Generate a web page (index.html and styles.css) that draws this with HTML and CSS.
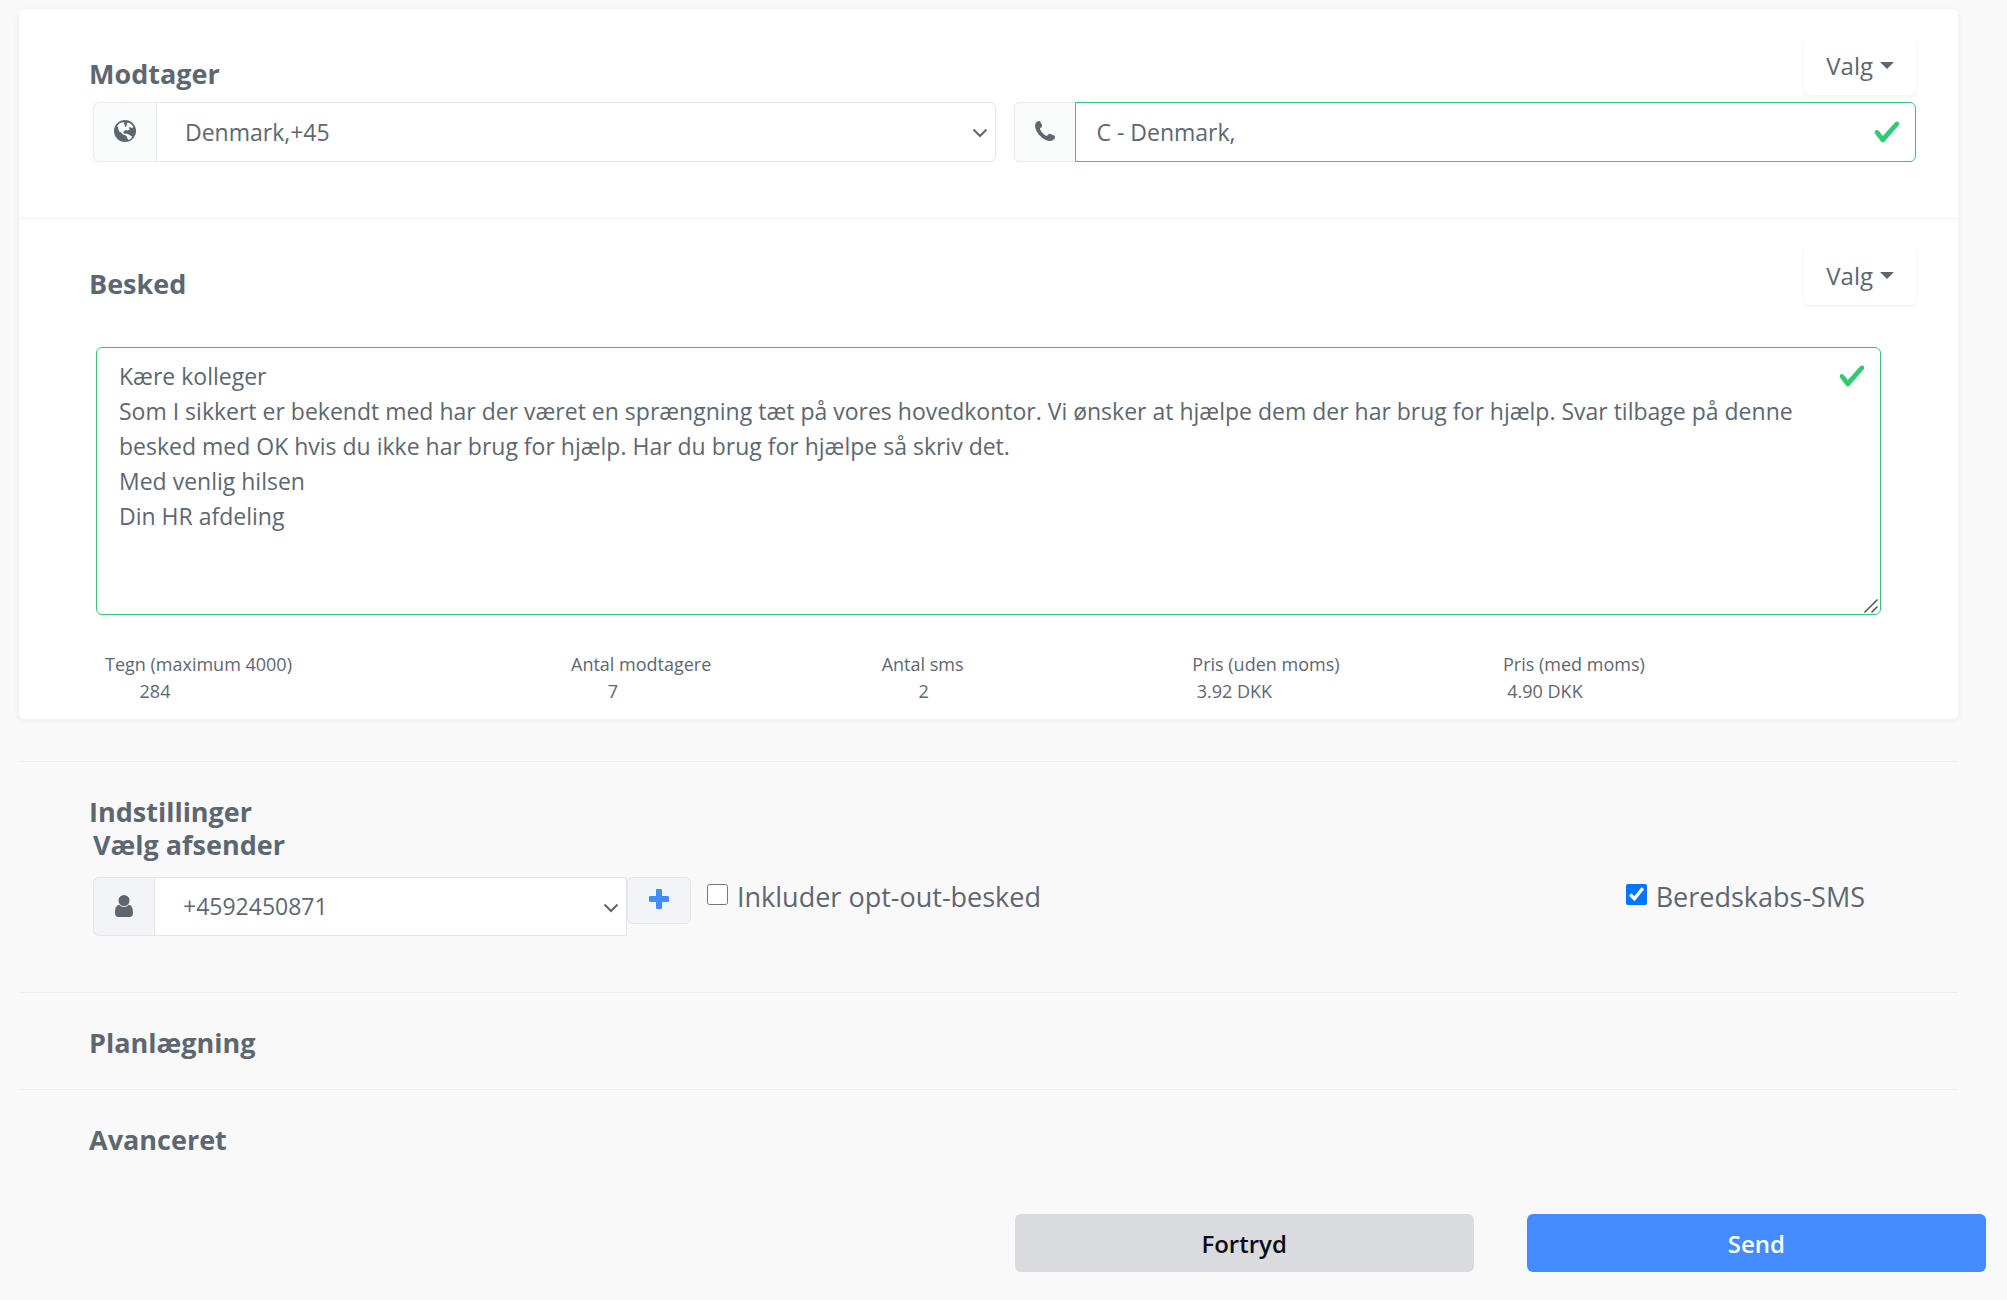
FILE: index.html
```html
<!DOCTYPE html>
<html lang="da">
<head>
<meta charset="utf-8">
<meta name="viewport" content="width=device-width, initial-scale=1">
<title>Send SMS</title>
<link rel="stylesheet" href="styles.css">
</head>
<body>
<form class="page">
  <div class="card">
    <section class="section">
      <div class="section-head">
        <h2 class="title">Modtager</h2>
        <button type="button" class="menu-button">Valg<span class="caret"></span></button>
      </div>
      <div class="recipient">
        <div class="group">
          <label class="addon addon-wide" for="country" aria-label="Land">
            <svg class="icon" width="22" height="22" viewBox="0 0 22 22"><circle cx="11" cy="11" r="11" fill="currentColor"/><path fill="#fafcfc" d="M3 6.200L5.200 3.400 8.500 2.300 10.600 2.600 9.800 3.800 11.300 4.900 12.300 5.800 13.300 4.200 12.500 2.900 14.800 2.800 17.400 4.300 19.300 6.800 18.300 8.300 15.600 7.100 14.600 8.100 16 9.300 13.500 10.600 11.500 10 9.600 11.600 9.300 13 11 13.800 13.500 13.700 16.300 15.400 18.200 16.500 16.600 18.900 14.300 20 13.400 18.300 12.800 16.600 11 15.200 9.300 14.700 7.200 12.500 5.500 11.700 4.300 9.300 4.200 7.200z"/><path fill="currentColor" d="M10.300 5.500l1.500-.8.900 1.500-1.500.8z"/></svg>
          </label>
          <div class="control">
            <select id="country" class="field select rounded-end"><option>Denmark,+45</option></select>
            <svg class="chevron" width="16" height="10" viewBox="0 0 16 10"><path d="M1.500 1.500L8 8l6.500-6.500" fill="none" stroke="currentColor" stroke-width="2"/></svg>
          </div>
        </div>
        <div class="group">
          <label class="addon" for="phone" aria-label="Telefon">
            <svg class="icon" width="20" height="20" viewBox="0 0 20 20"><path fill="currentColor" d="M.6 2.200C1.500.8 2.900 0 4 0c.8 0 1.200.4 1.600 1.200l1.300 2.600c.4.900.2 1.700-.4 2.200L5.200 7.200c-.3.400-.3.800-.1 1.300 1.200 2.600 3.200 4.800 5.900 6.200.5.300 1 .2 1.300-.2l1.100-1.200c.5-.6 1.400-.7 2.200-.3l3.400 1.500c.8.400 1.100 1 1 1.800-.2 1.200-1.100 2.500-2.500 3.200-1.800.9-4.500.5-7.200-.8C5.300 16.200 1.600 11.600.4 7 0 5.200 0 3.500.6 2.200z"/></svg>
          </label>
          <div class="control">
            <input id="phone" class="field valid rounded-end" type="text" value="C - Denmark,">
            <svg class="check" width="28" height="28" viewBox="0 0 8 8"><path fill="#33c972" d="M2.300 6.730L.6 4.530c-.4-1.040.46-1.400 1.100-.8l1.100 1.400 3.400-3.800c.6-.63 1.600-.27 1.200.7l-4 4.600c-.43.5-.8.4-1.100.1z"/></svg>
          </div>
        </div>
      </div>
    </section>

    <section class="section message">
      <div class="section-head">
        <h2 class="title"><label for="message">Besked</label></h2>
        <button type="button" class="menu-button">Valg<span class="caret"></span></button>
      </div>
      <div class="message-box">
        <textarea id="message" class="field valid textarea">Kære kolleger
Som I sikkert er bekendt med har der været en sprængning tæt på vores hovedkontor. Vi ønsker at hjælpe dem der har brug for hjælp. Svar tilbage på denne besked med OK hvis du ikke har brug for hjælp. Har du brug for hjælpe så skriv det.
Med venlig hilsen
Din HR afdeling</textarea>
        <svg class="check check-top" width="28" height="28" viewBox="0 0 8 8"><path fill="#33c972" d="M2.300 6.730L.6 4.530c-.4-1.040.46-1.400 1.100-.8l1.100 1.400 3.400-3.800c.6-.63 1.600-.27 1.200.7l-4 4.600c-.43.5-.8.4-1.100.1z"/></svg>
        <svg class="grip" width="14" height="14" viewBox="0 0 14 14"><path d="M.5 13.500l13-13M7.500 13.500l6-6" stroke="#555" stroke-width="1.500"/></svg>
      </div>
      <dl class="stats">
        <div class="stat"><dt>Tegn (maximum 4000)</dt><dd class="wide">284</dd></div>
        <div class="stat"><dt>Antal modtagere</dt><dd>7</dd></div>
        <div class="stat"><dt>Antal sms</dt><dd>2</dd></div>
        <div class="stat"><dt>Pris (uden moms)</dt><dd>3.92 DKK</dd></div>
        <div class="stat"><dt>Pris (med moms)</dt><dd>4.90 DKK</dd></div>
      </dl>
    </section>
  </div>

  <section class="panel panel-settings">
    <h2 class="title">Indstillinger</h2>
    <label class="title subtitle" for="sender">Vælg afsender</label>
    <div class="settings">
      <div class="group sender">
        <label class="addon addon-grey" for="sender" aria-label="Afsender">
          <svg class="icon" width="18" height="22" viewBox="0 0 18 22"><circle cx="9" cy="5.500" r="5.500" fill="currentColor"/><path fill="currentColor" d="M4.300 9.800C5.500 11.300 7.200 12 9 12s3.500-.7 4.700-2.200c3 .3 4.300 3.400 4.300 8.200 0 2.600-1.300 4-3.500 4h-11C1.300 22 0 20.600 0 18c0-4.800 1.300-7.900 4.300-8.200z"/></svg>
        </label>
        <div class="control">
          <select id="sender" class="field select"><option>+4592450871</option></select>
          <svg class="chevron" width="16" height="10" viewBox="0 0 16 10"><path d="M1.500 1.500L8 8l6.500-6.500" fill="none" stroke="currentColor" stroke-width="2"/></svg>
        </div>
      </div>
      <button type="button" class="add" aria-label="Tilføj afsender">
        <svg width="20" height="20" viewBox="0 0 20 20"><path fill="#448bff" d="M8 0h4q1 0 1 1v6h6q1 0 1 1v4q0 1-1 1h-6v6q0 1-1 1H8q-1 0-1-1v-6H1q-1 0-1-1V8q0-1 1-1h6V1q0-1 1-1z"/></svg>
      </button>
      <label class="tick"><input type="checkbox">Inkluder opt-out-besked</label>
      <label class="tick tick-end"><input type="checkbox" checked>Beredskabs-SMS</label>
    </div>
  </section>
  <section class="panel"><h2 class="title">Planlægning</h2></section>
  <section class="panel"><h2 class="title">Avanceret</h2></section>

  <div class="actions">
    <button type="reset" class="button button-light">Fortryd</button>
    <button type="submit" class="button button-primary">Send</button>
  </div>
</form>
</body>
</html>
```
FILE: styles.css
```css
* {
  box-sizing: border-box;
}

body {
  margin: 0;
  background: #f9f9fa;
  color: #5e6770;
  font: 24px/35px "Open Sans", "Noto Sans", sans-serif;
}

button,
input,
select,
textarea {
  color: inherit;
  font: inherit;
}

svg {
  display: block;
}

.page {
  padding: 9px 49px 28px 19px;
}

.card {
  background: #fff;
  border-radius: 6px;
  box-shadow: 0 0 0 1px #f4f4f5, 0 2px 6px rgba(0, 0, 0, 0.06);
}

.section {
  padding: 27px 42px 56px 70px;
}

.message {
  padding-bottom: 14px;
  border-top: 1px solid #f1f2f3;
}

.section-head {
  display: flex;
  justify-content: space-between;
  align-items: flex-end;
}

.title {
  margin: 0;
  font-size: 27px;
  line-height: 33px;
  font-weight: 700;
}

.section-head .title {
  padding-bottom: 5px;
}

.menu-button {
  display: flex;
  align-items: center;
  gap: 7px;
  height: 59px;
  padding: 0 22px;
  border: 0;
  border-radius: 6px;
  background: #fff;
  box-shadow: 0 2px 4px rgba(0, 0, 0, 0.05);
  font-weight: 500;
}

.caret {
  border: 7px solid transparent;
  border-top-color: currentColor;
  border-bottom: 0;
}

.recipient {
  display: grid;
  grid-template-columns: 1fr 1fr;
  gap: 18px;
  margin: 7px 0 0 4px;
}

.group {
  display: flex;
  height: 60px;
}

.addon {
  display: flex;
  flex: none;
  align-items: center;
  justify-content: center;
  width: 61px;
  padding-bottom: 2px;
  border: 1px solid #e9ecec;
  border-right: 0;
  border-radius: 6px 0 0 6px;
  background: #fafcfc;
}

.addon-wide {
  width: 63px;
}

.addon-grey {
  border-color: #e4e6ea;
  background: #f3f4f7;
}

.control {
  position: relative;
  flex: 1;
}

.field {
  display: block;
  width: 100%;
  height: 100%;
  padding: 0 21px;
  border: 1px solid #e4e6ea;
  border-radius: 0;
  outline: 0;
  background: #fff;
  font-size: 23px;
}

.select {
  padding: 0 28px;
  appearance: none;
}

.rounded-end {
  border-radius: 0 6px 6px 0;
}

.valid {
  border-color: #33c972;
}

.chevron {
  position: absolute;
  top: 26px;
  right: 8px;
  pointer-events: none;
}

.check {
  position: absolute;
  top: 16px;
  right: 15px;
}

.message-box {
  position: relative;
  height: 268px;
  margin: 42px 35px 0 7px;
}

.textarea {
  padding: 11px 22px;
  border-radius: 6px;
  resize: none;
}

.check-top {
  top: 15px;
}

.grip {
  position: absolute;
  right: 3px;
  bottom: 2px;
}

.stats {
  display: grid;
  grid-template-columns: 3fr 2fr 2fr 2fr 3fr;
  margin: 36px -53px 0 16px;
  font-size: 18px;
  line-height: 27px;
}

.stat dd {
  width: 84px;
  margin: 0;
  text-align: center;
  white-space: nowrap;
}

.stat .wide {
  width: 100px;
}

.panel {
  padding: 33px 42px 30px 70px;
  border-top: 1px solid #ededef;
}

.panel-settings {
  margin-top: 42px;
  padding-bottom: 56px;
}

.subtitle {
  display: block;
  margin-left: 4px;
}

.settings {
  display: flex;
  align-items: flex-start;
  margin: 16px 0 0 4px;
}

.sender {
  width: 534px;
  height: 59px;
}

.add {
  display: flex;
  justify-content: center;
  width: 64px;
  height: 47px;
  padding: 11px 0;
  border: 1px solid #e4e6ea;
  border-radius: 6px;
  background: #f3f4f7;
}

.tick {
  display: flex;
  gap: 9px;
  margin-left: 16px;
  font-size: 27px;
  line-height: 39px;
}

.tick input {
  width: 21px;
  height: 21px;
  margin: 7px 0 0;
  accent-color: #0075ff;
}

.tick-end {
  margin: 0 51px 0 auto;
}

.actions {
  display: grid;
  grid-template-columns: 1fr 1fr;
  gap: 53px;
  margin: 28px -28px 0 calc(50% + 26px);
}

.button {
  height: 58px;
  border: 0;
  border-radius: 6px;
  font-weight: 600;
}

.button-light {
  background: #dadbdf;
  color: #0c0c14;
}

.button-primary {
  background: #448bff;
  color: #fff;
}
```
